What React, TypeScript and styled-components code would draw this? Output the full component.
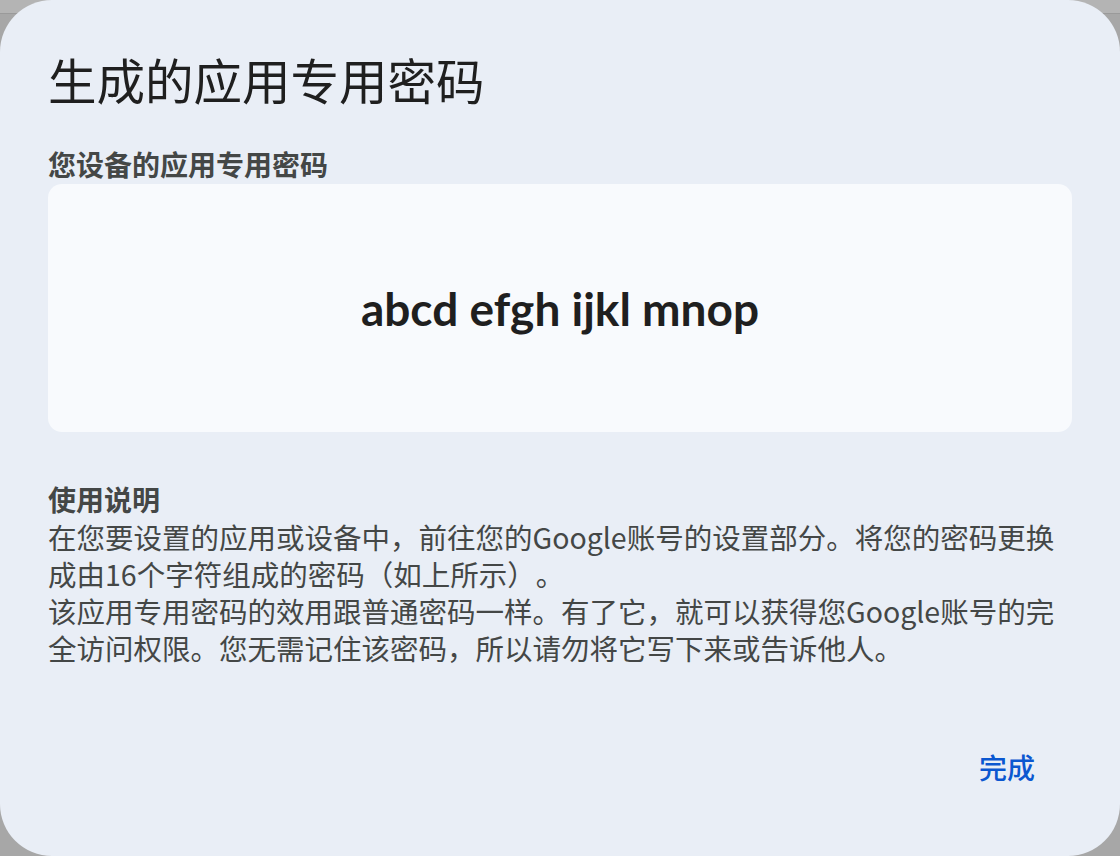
import React from 'react'
import styled, { createGlobalStyle } from 'styled-components';

const GlobalStyle = createGlobalStyle`
html, body {
  margin: 0;
  padding: 0;
}
body {
  width: 1120px;
  height: 856px;
  overflow: hidden;
  background: linear-gradient(#b4b4b4 0px, #b4b4b4 13px, #9a9a9a 13px, #9a9a9a 14px, #a7a7a7 14px);
  font-family: "Noto Sans CJK SC", "Noto Sans", sans-serif;
  text-spacing-trim: space-all;
}
`;

const Dialog = styled.div`
width: 1120px;
height: 856px;
box-sizing: border-box;
border-radius: 52px;
background-color: #e9eef6;
padding: 51px 48px 0px 48px;
display: flex;
flex-direction: column;
`;

const Title = styled.h1`
margin: 0px;
font-size: 48.5px;
line-height: 56px;
font-weight: 400;
color: #1f1f1f;
`;

const Label = styled.div`
margin-top: 39px;
font-size: 28px;
line-height: 36px;
font-weight: 700;
color: #444746;
`;

const PasswordCard = styled.div`
margin-top: 2px;
height: 248px;
border-radius: 14px;
background-color: #f8fafd;
display: flex;
align-items: center;
justify-content: center;
`;

const Password = styled.span`
font-family: Lato, "Noto Sans", sans-serif;
font-size: 46px;
font-weight: 700;
color: #1f1f1f;
`;

const Section = styled.div`
margin-top: 48px;
max-width: 1015px;
color: #444746;
`;

const SectionTitle = styled.div`
font-size: 28px;
line-height: 38px;
font-weight: 700;
`;

const Paragraph = styled.p`
margin: 0px;
font-size: 28.5px;
line-height: 37px;
font-weight: 400;
`;

const Footer = styled.div`
margin-top: auto;
margin-bottom: 65px;
display: flex;
justify-content: flex-end;
padding-right: 13px;
`;

const TextButton = styled.button`
border: none;
background: transparent;
padding: 6px 24px;
font-family: "Noto Sans CJK SC", sans-serif;
font-size: 28px;
line-height: 36px;
font-weight: 500;
color: #0b57d0;
cursor: pointer;
`;

function App() {
  return (
    <>
      <GlobalStyle />
      <Dialog>
        <Title>生成的应用专用密码</Title>
        <Label>您设备的应用专用密码</Label>
        <PasswordCard>
          <Password>abcd efgh ijkl mnop</Password>
        </PasswordCard>
        <Section>
          <SectionTitle>使用说明</SectionTitle>
          <Paragraph>在您要设置的应用或设备中，前往您的Google账号的设置部分。将您的密码更换成由16个字符组成的密码（如上所示）。</Paragraph>
          <Paragraph>该应用专用密码的效用跟普通密码一样。有了它，就可以获得您Google账号的完全访问权限。您无需记住该密码，所以请勿将它写下来或告诉他人。</Paragraph>
        </Section>
        <Footer>
          <TextButton>完成</TextButton>
        </Footer>
      </Dialog>
    </>
  )
}

export default App
